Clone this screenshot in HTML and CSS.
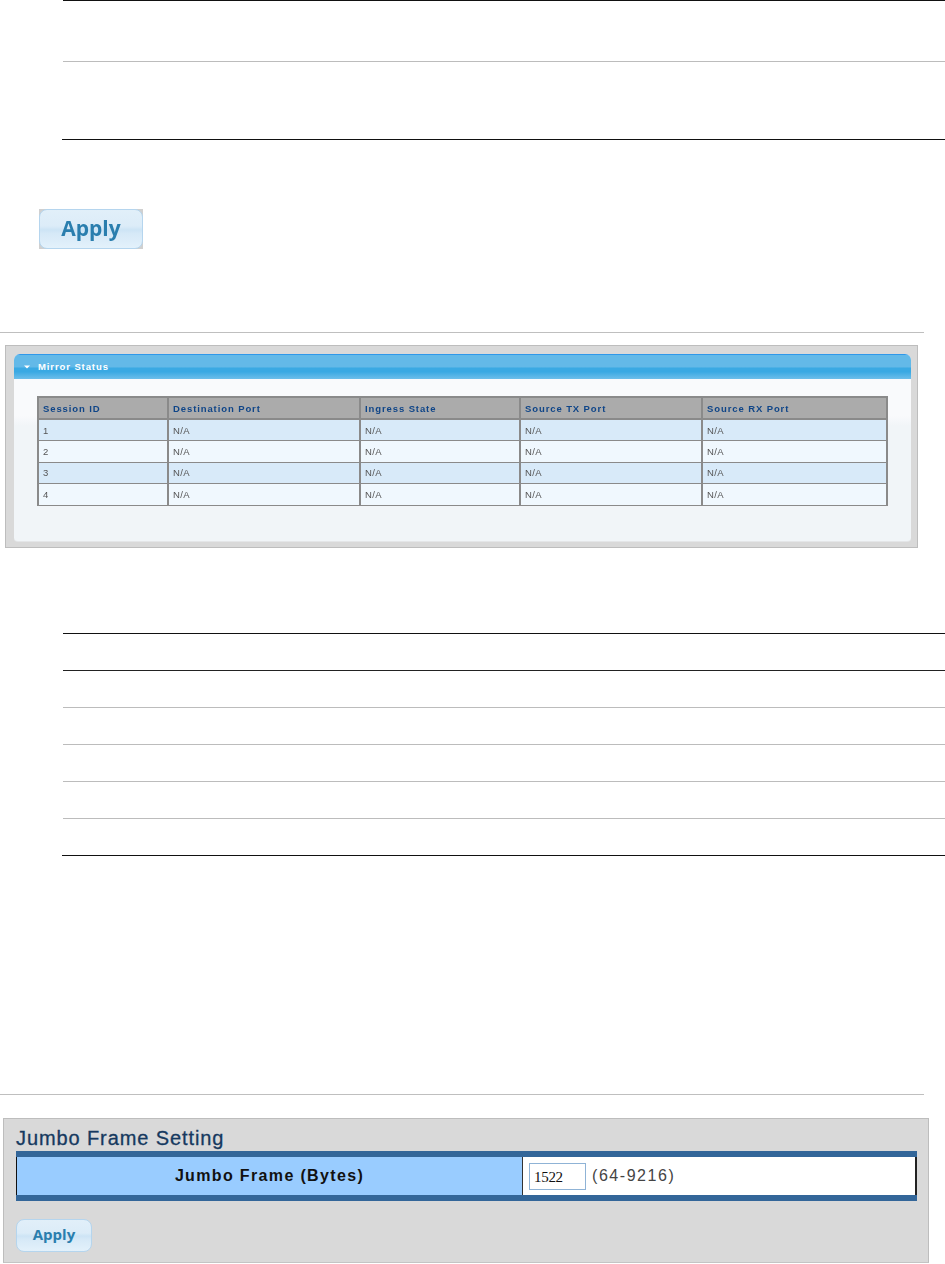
FILE: index.html
```html
<!DOCTYPE html>
<html lang="en">
<head>
<meta charset="utf-8">
<title>Mirror Status and Jumbo Frame</title>
<link rel="stylesheet" href="styles.css">
</head>
<body>
<div class="rules rules-top">
  <div class="rule rule-black h61"></div>
  <div class="rule rule-gray h78"></div>
  <div class="rule rule-black rule-wide"></div>
</div>

<div class="apply-plate apply-large"><button class="apply" type="button">Apply</button></div>

<hr class="divider divider-one">

<section class="mirror">
  <div class="mirror-inner">
    <h2 class="mirror-head">
      <svg class="caret" width="6" height="4" viewBox="0 0 6 4"><polygon points="0,0.5 6,0.5 3,3.5" fill="#fff"/></svg>
      <span>Mirror Status</span>
    </h2>
    <div class="mirror-body">
      <table class="status">
        <colgroup><col class="c1"><col class="c2"><col class="c3"><col class="c4"><col class="c5"></colgroup>
        <thead>
          <tr><th>Session ID</th><th>Destination Port</th><th>Ingress State</th><th>Source TX Port</th><th>Source RX Port</th></tr>
        </thead>
        <tbody>
          <tr class="odd"><td>1</td><td>N/A</td><td>N/A</td><td>N/A</td><td>N/A</td></tr>
          <tr class="even"><td>2</td><td>N/A</td><td>N/A</td><td>N/A</td><td>N/A</td></tr>
          <tr class="odd"><td>3</td><td>N/A</td><td>N/A</td><td>N/A</td><td>N/A</td></tr>
          <tr class="even"><td>4</td><td>N/A</td><td>N/A</td><td>N/A</td><td>N/A</td></tr>
        </tbody>
      </table>
    </div>
  </div>
</section>

<div class="rules rules-mid">
  <div class="rule rule-black h37"></div>
  <div class="rule rule-dark h37"></div>
  <div class="rule rule-gray h37"></div>
  <div class="rule rule-gray h37"></div>
  <div class="rule rule-gray h37"></div>
  <div class="rule rule-gray h37"></div>
  <div class="rule rule-black rule-wide"></div>
</div>

<hr class="divider divider-two">

<section class="jumbo">
  <h2 class="jumbo-title">Jumbo Frame Setting</h2>
  <div class="jumbo-table">
    <div class="jumbo-label">Jumbo Frame (Bytes)</div>
    <div class="jumbo-value">
      <input class="jumbo-input" type="text" value="1522">
      <span class="jumbo-range">(64-9216)</span>
    </div>
  </div>
  <div class="apply-plate apply-small"><button class="apply" type="button">Apply</button></div>
</section>
</body>
</html>
```
FILE: styles.css
```css
* { box-sizing: border-box; }
html, body { margin: 0; padding: 0; background: #fff; }
body { width: 945px; height: 1264px; overflow: hidden; font-family: "Liberation Sans", Arial, sans-serif; }

.rules { margin-left: 63px; }
.rule { border-top: 1px solid #000; }
.rule-black { border-top-color: #111; }
.rule-dark { border-top-color: #222; }
.rule-gray { border-top-color: #bcbcbc; }
.rule-wide { margin-left: -1px; }
.h61 { height: 61px; }
.h78 { height: 78px; }
.h37 { height: 37px; }
.rules-mid { margin-top: 85px; }

.apply-plate { display: block; background: #d0d0d0; }
.apply {
  display: block; width: 100%; height: 100%; padding: 0 0 3px; cursor: pointer;
  border: 1px solid #b5d5ee; border-radius: 8px;
  background: linear-gradient(#e1eff9 0%, #dcecf8 42%, #cde4f5 52%, #d6e9f7 62%, #e3f1fb 100%);
  color: #2a7eae; font-family: "Open Sans", "DejaVu Sans", sans-serif; font-weight: 700;
}
.apply-large { width: 104px; height: 40px; margin: 69px 0 0 39px; filter: blur(.3px); }
.apply-large .apply { font-size: 21px; }
.apply-small { width: 76px; height: 33px; margin: 18px 0 0; background: transparent; }
.apply-small .apply { font-size: 15px; }

.divider { width: 924px; height: 1px; margin: 0; border: 0; background: #bfbfbf; }
.divider-one { margin-top: 83px; }
.divider-two { margin-top: 238px; }

.mirror {
  width: 913px; height: 203px; margin: 12px 0 0 5px; padding: 8px 6px 5px 8px;
  background: #d9d9d9; border: 1px solid #bdbdbd;
}
.mirror-inner {
  height: 100%; border-radius: 6px 6px 4px 4px; overflow: hidden;
  background: linear-gradient(#f9fafc 0, #f9fafc 62px, #f1f5f8 72px, #f1f5f8 100%);
  border-bottom: 1px solid #e4e6e8;
}
.mirror-head {
  display: flex; align-items: center; gap: 8px; height: 25px; margin: 0; padding: 0 0 1px 10px;
  border-top: 1px solid #2f98ea;
  background: linear-gradient(#63b9e8 0, #63b9e8 50%, #3aa9e3 54%, #3aa9e3 70%, #6dbeea 100%);
  color: #fff; font: 700 9.5px "Liberation Sans", Arial, sans-serif; letter-spacing: .9px;
}
.caret { flex: none; }
.mirror-body { padding: 17px 0 0 23px; filter: blur(.3px); }

.status {
  width: 849px; table-layout: fixed; border-collapse: collapse;
  font: 9.5px "Liberation Sans", Arial, sans-serif; letter-spacing: .4px;
}
.c1 { width: 130px; }
.c2 { width: 192px; }
.c3 { width: 160px; }
.c4 { width: 182px; }
.c5 { width: 185px; }
.status th, .status td { padding: 0 0 0 4px; border: 2px solid #8a8a8a; text-align: left; white-space: nowrap; }
.status th { height: 22px; background: #ababab; color: #0f4588; font-weight: 700; letter-spacing: .9px; }
.status td { height: 21.5px; color: #555; border-width: 1px 2px; }
.odd td { background: #d8eaf9; }
.even td { background: #f0f8fe; }

.jumbo {
  width: 926px; height: 145px; margin: 23px 0 0 3px; padding: 10px 0 0 12px;
  background: #d9d9d9; border: 1px solid #bdbdbd; border-bottom-color: #c4c4c4;
}
.jumbo-title {
  height: 22px; margin: 0; color: #16395f; font: 400 20px/19px "Liberation Sans", Arial, sans-serif;
  letter-spacing: .9px; -webkit-text-stroke: .3px #16395f;
}
.jumbo-table {
  display: grid; grid-template-columns: 507px 394px; width: 901px; height: 50px;
  border-top: 6px solid #336699; border-bottom: 6px solid #336699;
}
.jumbo-label {
  display: flex; align-items: center; justify-content: center;
  background: #99ccff; border-left: 1px solid #111; border-right: 1px solid #333;
  color: #111; font-size: 16px; font-weight: 700; letter-spacing: 1.35px;
}
.jumbo-value {
  display: flex; align-items: center; gap: 6px; padding-left: 6px;
  background: #fff; border-right: 2px solid #222;
}
.jumbo-input {
  width: 57px; height: 27px; padding: 2px 0 0 4px; border: 1px solid #8fb3d6; background: #fff;
  color: #111; font: 15px "Liberation Serif", "Times New Roman", serif; letter-spacing: -.3px;
}
.jumbo-range { color: #444; font-size: 16px; letter-spacing: 1.55px; }
```
